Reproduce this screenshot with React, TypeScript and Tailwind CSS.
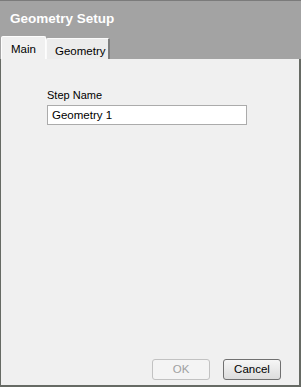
import React from 'react';

const font = { fontFamily: '"Liberation Sans", Arial, sans-serif' };

export default function App() {
  return (
    <div className="w-[301px] h-[387px] flex flex-col bg-[#666a64] select-none" style={font}>
      <div className="h-px bg-[#7b7b7b]" />
      <div className="h-[58px] bg-[#a3a3a3] flex flex-col">
        <div className="pl-[10px] pt-[9px] text-[13.5px] font-bold text-white leading-[18px]">Geometry Setup</div>
        <div className="mt-auto flex items-end pl-px">
          <div className="w-[45px] h-[23px] bg-[#f0f0f0] border-t border-l border-r border-[#fdfdfd] rounded-t-[2px] text-[11.5px] text-black pl-[9px] pt-[4px]">
            Main
          </div>
          <div className="w-[64px] h-[21px] bg-[#ececec] border-t border-l border-[#fafafa] border-r-2 border-r-[#7e7e7e] rounded-t-[2px] text-[11.5px] text-black pl-[8px] pt-[4px]">
            Geometry
          </div>
        </div>
      </div>
      <div className="flex-1 ml-px mr-[2px] mb-[2px] bg-[#f0f0f0] flex flex-col">
        <div className="pl-[46px] pt-[30px]">
          <div className="text-[11px] text-black leading-[13px]">Step Name</div>
          <input
            readOnly
            value="Geometry 1"
            className="mt-[2px] w-[200px] h-[20px] bg-white border border-[#ababab] px-[4px] text-[11.5px] text-black outline-none"
            style={font}
          />
        </div>
        <div className="mt-auto mb-[5px] flex justify-end gap-[13px] pr-[18px]">
          <button className="w-[58px] h-[21px] rounded-[3px] border border-[#c2c2c2] bg-[#f4f4f4] text-[11.5px] text-[#a0a0a0]" style={font}>
            OK
          </button>
          <button className="w-[58px] h-[21px] rounded-[3px] border border-[#707070] bg-gradient-to-b from-[#f6f6f6] to-[#dcdcdc] text-[11.5px] text-black" style={font}>
            Cancel
          </button>
        </div>
      </div>
    </div>
  );
}
